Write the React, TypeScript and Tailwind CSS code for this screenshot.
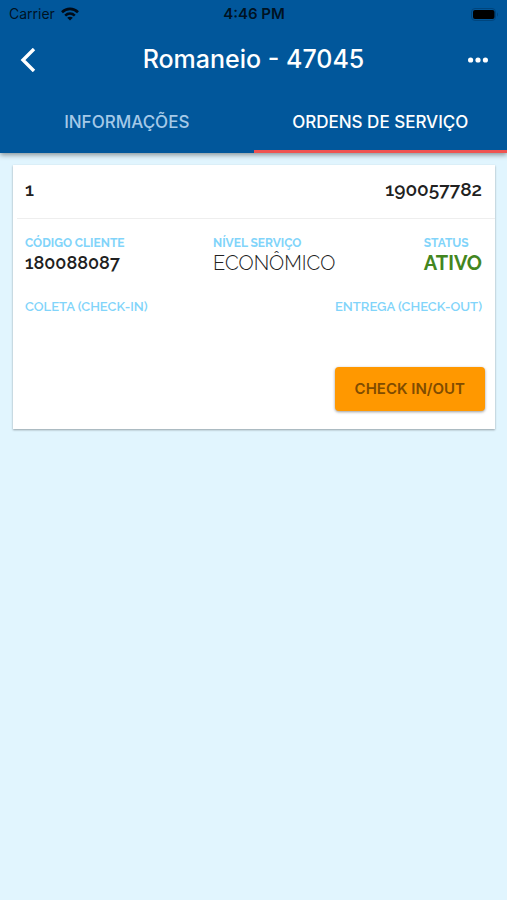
type FieldProps = {
  label: string;
  labelClass?: string;
  value?: string;
  valueClass?: string;
};

function Field({ label, labelClass = "text-xs font-bold", value, valueClass = "" }: FieldProps) {
  return (
    <div>
      <dt className={`leading-4 text-[#81d4fa] ${labelClass}`}>{label}</dt>
      {value && <dd className={`leading-6 ${valueClass}`}>{value}</dd>}
    </div>
  );
}

function StatusBar() {
  return (
    <div className="grid h-7 grid-cols-3 items-center pr-2 pl-[9px] text-sm text-black/80">
      <div className="flex items-center gap-1.5">
        <span>Carrier</span>
        <svg viewBox="0 0 18 14" className="h-3.5 w-4.5" fill="none" stroke="#000b18" strokeWidth="2.6">
          <path d="M1 5.2C5.6.7 12.4.7 17 5.2" />
          <path d="M4.2 8.6c2.8-2.6 6.8-2.6 9.6 0" />
          <path d="M9 13.6 6.2 10.8c1.6-1.4 4-1.4 5.6 0Z" fill="#000b18" stroke="none" />
        </svg>
      </div>
      <span className="text-center text-[15px] font-semibold">4:46 PM</span>
      <svg viewBox="0 0 28 13" className="h-[13px] w-7 justify-self-end">
        <rect x="0.5" y="0.5" width="24" height="12" rx="3.5" fill="none" stroke="#00457d" />
        <rect x="2" y="2" width="21.5" height="9" rx="2" fill="#000" />
        <path d="M26 4.5c1.3.5 1.3 3.5 0 4Z" fill="#00457d" />
      </svg>
    </div>
  );
}

export default function App() {
  return (
    <div className="min-h-screen bg-[#e1f5fe] font-['Inter','Liberation_Sans',sans-serif]">
      <header className="relative bg-[#01579b] text-white shadow-[0_2px_5px_rgba(0,0,0,0.4)]">
        <StatusBar />
        <div className="grid h-16 grid-cols-[56px_1fr_56px] items-center">
          <button type="button" aria-label="Voltar" className="flex h-full items-center pl-5">
            <svg viewBox="0 0 16 24" className="h-6 w-4" fill="none" stroke="currentColor" strokeWidth="3.4">
              <path d="M14 1 3 12l11 11" />
            </svg>
          </button>
          <h1 className="text-center text-[25px] font-medium">Romaneio - 47045</h1>
          <button type="button" aria-label="Mais opções" className="flex h-full items-center justify-end pr-[19px]">
            <svg viewBox="0 0 20 6" className="h-1.5 w-5" fill="currentColor">
              <circle cx="2.6" cy="3" r="2.6" />
              <circle cx="10" cy="3" r="2.6" />
              <circle cx="17.4" cy="3" r="2.6" />
            </svg>
          </button>
        </div>
        <div role="tablist" className="grid h-[61px] grid-cols-2 text-[17px] font-medium">
          <button type="button" role="tab" aria-selected="false" className="border-b-3 border-transparent pt-1 text-[#a5c9e8]">
            INFORMAÇÕES
          </button>
          <button type="button" role="tab" aria-selected="true" className="border-b-3 border-[#ef5350] pt-1">
            ORDENS DE SERVIÇO
          </button>
        </div>
      </header>
      <main className="py-3 pr-3 pl-[13px]">
        <article className="bg-white font-['Raleway','Lato',sans-serif] text-[#212121] shadow-[0_1px_2px_rgba(0,0,0,0.35)]">
          <div className="ml-1 flex h-[54px] items-center justify-between border-b border-[#eeeeee] pr-[13px] pb-1 pl-2 text-[19px] font-semibold">
            <span>1</span>
            <span>190057782</span>
          </div>
          <dl className="flex flex-col gap-6 pt-4 pr-[13px] pl-3">
            <div className="flex justify-between">
              <Field label="CÓDIGO CLIENTE" value="180088087" valueClass="text-lg font-semibold" />
              <Field label="NÍVEL SERVIÇO" value="ECONÔMICO" valueClass="text-xl font-light" />
              <Field label="STATUS" value="ATIVO" valueClass="text-xl font-bold text-[#43861f]" />
            </div>
            <div className="flex justify-between">
              <Field label="COLETA (CHECK-IN)" labelClass="text-[13px] font-semibold" />
              <Field label="ENTREGA (CHECK-OUT)" labelClass="text-[13px] font-semibold" />
            </div>
          </dl>
          <div className="flex justify-end px-2.5 pt-[52px] pb-[18px]">
            <button
              type="button"
              className="h-11 rounded bg-[#ff9800] px-5 font-['Inter','Liberation_Sans',sans-serif] text-[15px] font-semibold text-[#804c00] shadow-[0_1px_3px_rgba(0,0,0,0.4)]"
            >
              CHECK IN/OUT
            </button>
          </div>
        </article>
      </main>
    </div>
  );
}
